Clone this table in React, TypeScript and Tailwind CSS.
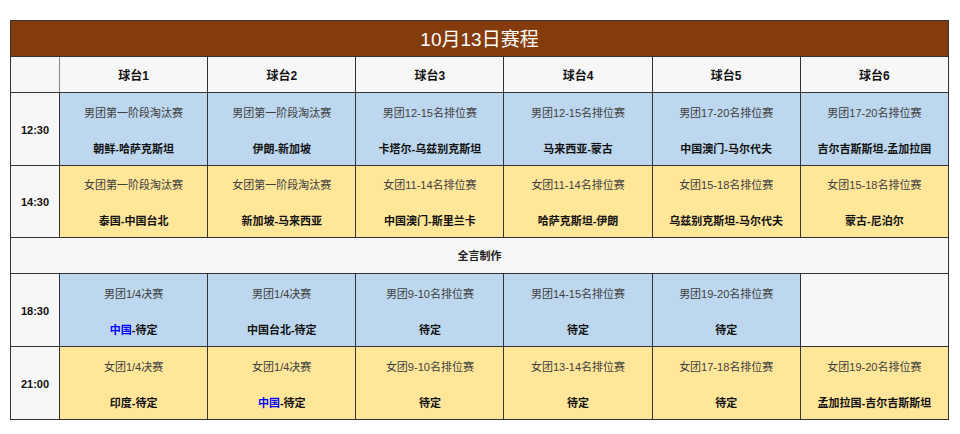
import React from 'react';

type Cell = { title: string; match: React.ReactNode; color: 'blue' | 'yellow' } | null;

const cn = (s: string) => <span className="text-[#0000ff]">{s}</span>;

const tables = ['球台1', '球台2', '球台3', '球台4', '球台5', '球台6'];

const row1230: Cell[] = [
  { title: '男团第一阶段淘汰赛', match: '朝鲜-哈萨克斯坦', color: 'blue' },
  { title: '男团第一阶段淘汰赛', match: '伊朗-新加坡', color: 'blue' },
  { title: '男团12-15名排位赛', match: '卡塔尔-乌兹别克斯坦', color: 'blue' },
  { title: '男团12-15名排位赛', match: '马来西亚-蒙古', color: 'blue' },
  { title: '男团17-20名排位赛', match: '中国澳门-马尔代夫', color: 'blue' },
  { title: '男团17-20名排位赛', match: '吉尔吉斯斯坦-孟加拉国', color: 'blue' },
];

const row1430: Cell[] = [
  { title: '女团第一阶段淘汰赛', match: '泰国-中国台北', color: 'yellow' },
  { title: '女团第一阶段淘汰赛', match: '新加坡-马来西亚', color: 'yellow' },
  { title: '女团11-14名排位赛', match: '中国澳门-斯里兰卡', color: 'yellow' },
  { title: '女团11-14名排位赛', match: '哈萨克斯坦-伊朗', color: 'yellow' },
  { title: '女团15-18名排位赛', match: '乌兹别克斯坦-马尔代夫', color: 'yellow' },
  { title: '女团15-18名排位赛', match: '蒙古-尼泊尔', color: 'yellow' },
];

const row1830: Cell[] = [
  { title: '男团1/4决赛', match: <>{cn('中国')}-待定</>, color: 'blue' },
  { title: '男团1/4决赛', match: '中国台北-待定', color: 'blue' },
  { title: '男团9-10名排位赛', match: '待定', color: 'blue' },
  { title: '男团14-15名排位赛', match: '待定', color: 'blue' },
  { title: '男团19-20名排位赛', match: '待定', color: 'blue' },
  null,
];

const row2100: Cell[] = [
  { title: '女团1/4决赛', match: '印度-待定', color: 'yellow' },
  { title: '女团1/4决赛', match: <>{cn('中国')}-待定</>, color: 'yellow' },
  { title: '女团9-10名排位赛', match: '待定', color: 'yellow' },
  { title: '女团13-14名排位赛', match: '待定', color: 'yellow' },
  { title: '女团17-18名排位赛', match: '待定', color: 'yellow' },
  { title: '女团19-20名排位赛', match: '孟加拉国-吉尔吉斯斯坦', color: 'yellow' },
];

const MatchRow = ({ time, cells, h }: { time: string; cells: Cell[]; h: string }) => (
  <tr className={h}>
    <td className="border border-[#333] bg-[#f7f7f7] text-center font-bold text-[11px] text-[#111] pt-[2px]">{time}</td>
    {cells.map((c, i) =>
      c ? (
        <td
          key={i}
          className={`border border-[#333] text-center align-middle pt-[3px] ${c.color === 'blue' ? 'bg-[#bdd7ee]' : 'bg-[#ffe699]'}`}
        >
          <div className="flex flex-col items-center gap-[18px] text-[11px] leading-[18px]">
            <div className="text-[#404040]">{c.title}</div>
            <div className="font-bold text-[#111]">{c.match}</div>
          </div>
        </td>
      ) : (
        <td key={i} className="border border-[#333] bg-[#f7f7f7]" />
      )
    )}
  </tr>
);

export default function App() {
  return (
    <div className="w-[960px] h-[434px] bg-white pt-[20px] pl-[10px] font-['Liberation_Sans','Noto_Sans_CJK_SC',sans-serif]">
      <table className="w-[939px] border-collapse table-fixed border border-[#333]">
        <colgroup>
          <col className="w-[49px]" />
          {tables.map((t) => (
            <col key={t} />
          ))}
        </colgroup>
        <tbody>
          <tr className="h-[36px]">
            <td colSpan={7} className="bg-[#843c0c] border border-[#333] text-center text-white text-[19px] pt-[3px]">
              10月13日赛程
            </td>
          </tr>
          <tr className="h-[36px]">
            <td className="border border-[#333] border-r-[#888] bg-[#f7f7f7]" />
            {tables.map((t) => (
              <td key={t} className="border border-[#333] bg-[#f7f7f7] text-center font-bold text-[12px] text-[#111] pt-[3px]">
                {t}
              </td>
            ))}
          </tr>
          <MatchRow time="12:30" cells={row1230} h="h-[73px]" />
          <MatchRow time="14:30" cells={row1430} h="h-[72px]" />
          <tr className="h-[36px]">
            <td colSpan={7} className="border border-[#333] bg-[#f7f7f7] text-center font-bold text-[11px] text-[#222] pt-[2px]">
              全言制作
            </td>
          </tr>
          <MatchRow time="18:30" cells={row1830} h="h-[73px]" />
          <MatchRow time="21:00" cells={row2100} h="h-[73px]" />
        </tbody>
      </table>
    </div>
  );
}
